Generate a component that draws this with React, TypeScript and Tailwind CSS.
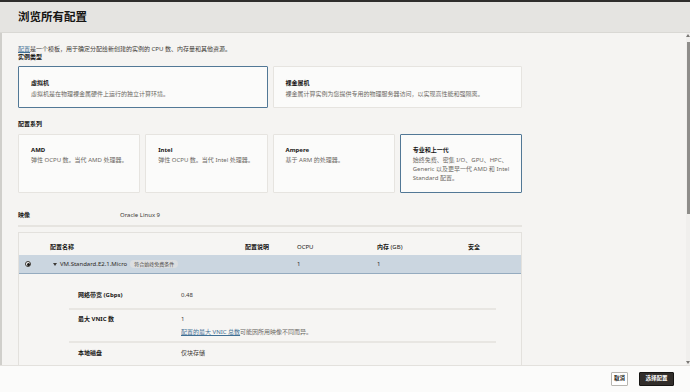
import type { ReactNode } from "react";

const seriesCards = [
  {
    title: "AMD",
    lines: ["弹性 OCPU 数。当代 AMD 处理器。"],
    selected: false,
  },
  {
    title: "Intel",
    lines: ["弹性 OCPU 数。当代 Intel 处理器。"],
    selected: false,
  },
  {
    title: "Ampere",
    lines: ["基于 ARM 的处理器。"],
    selected: false,
  },
  {
    title: "专业和上一代",
    lines: [
      "始终免费、密集 I/O、GPU、HPC、",
      "Generic 以及更早一代 AMD 和 Intel",
      "Standard 配置。",
    ],
    selected: true,
  },
];

const cols = "grid grid-cols-[31px_195px_52px_80px_91px_1fr]";

export default function App() {
  return (
    <div className="flex h-[392px] w-[690px] flex-col overflow-hidden bg-[#f5f4f2] font-[family-name:'Noto_Sans','Noto_Sans_CJK_SC',sans-serif] text-[#161513]">
      <div className="h-[2px] bg-[#2f2e2c]" />

      <header className="flex h-[31px] items-center border-b border-[#d9d8d4] bg-[#e5e4e1] pl-[18px]">
        <h1 className="text-[11.5px] font-bold leading-none">
          浏览所有配置
        </h1>
      </header>

      <div className="flex min-h-0 flex-1 border-l-2 border-[#d0cfcb]">
        <main className="min-w-0 flex-1 overflow-hidden pl-[16px] pt-[12px]">
          <div className="w-[504px]">
            <p className="text-[6px] leading-[8px] text-[#3d3a36]">
              <span className="text-[#3f6f94] underline">配置</span>
              是一个模板，用于确定分配给新创建的实例的 CPU 数、内存量和其他资源。
            </p>

            <p className="text-[6px] font-bold leading-[8px]">
              实例类型
            </p>

            <div className="mt-[5px] grid grid-cols-2 gap-[5px]">
              <ShapeCard
                title="虚拟机"
                selected
                height="h-[42px]"
              >
                虚拟机是在物理裸金属硬件上运行的独立计算环境。
              </ShapeCard>

              <ShapeCard title="裸金属机" height="h-[42px]">
                裸金属计算实例为您提供专用的物理服务器访问，以实现高性能和强隔离。
              </ShapeCard>
            </div>

            <p className="mt-[12px] text-[6px] font-bold leading-[8px]">
              配置系列
            </p>

            <div className="mt-[6px] grid grid-cols-4 gap-[5px]">
              {seriesCards.map((card) => (
                <div
                  key={card.title}
                  className={`h-[59px] rounded-[1px] bg-[#fbfbfa] pl-[12px] pt-[11px] ${
                    card.selected
                      ? "border border-[#527896]"
                      : "border border-[#e6e4e0]"
                  }`}
                >
                  <p className="text-[6px] font-bold leading-[8px]">
                    {card.title}
                  </p>

                  <div className="mt-[2px] text-[6px] leading-[9px] text-[#6b6863]">
                    {card.lines.map((line) => (
                      <p key={line}>{line}</p>
                    ))}
                  </div>
                </div>
              ))}
            </div>

            <div className="mt-[18px] flex h-[8px] items-center text-[6px] leading-[8px]">
              <span className="w-[102px] font-bold">映像</span>
              <span className="text-[#3d3a36]">Oracle Linux 9</span>
            </div>

            <div className="mt-[6px] h-[2px] bg-[#e6e4e0]" />

            <div className="mt-[5px] h-[200px] border border-[#e3e1dd] bg-[#f6f5f3]">
              <div
                className={`${cols} h-[22px] items-end pb-[4px] text-[6px] font-bold leading-[8px]`}
              >
                <span />
                <span>配置名称</span>
                <span>配置说明</span>
                <span className="font-normal">OCPU</span>
                <span>
                  内存 <span className="font-normal">(GB)</span>
                </span>
                <span>安全</span>
              </div>

              <div
                className={`${cols} h-[19px] items-center border-b border-[#95abbf] bg-[#cbd6e0] text-[6px] leading-[8px] text-[#2b2926]`}
              >
                <span className="flex pl-[6px]">
                  <span className="flex h-[6px] w-[6px] items-center justify-center rounded-full border border-[#3d3a36] bg-white">
                    <span className="h-[3px] w-[3px] rounded-full bg-[#161513]" />
                  </span>
                </span>

                <span className="flex items-center">
                  <svg
                    width="4"
                    height="3"
                    viewBox="0 0 4 3"
                    className="ml-[3px] mr-[3px]"
                  >
                    <path d="M0 0 L4 0 L2 3 Z" fill="#3d3a36" />
                  </svg>
                  <span>VM.Standard.E2.1.Micro</span>
                  <span className="ml-[3px] rounded-full bg-[#dcdee0] px-[4px] text-[5px] leading-[8px] text-[#4f4c48]">
                    符合始终免费条件
                  </span>
                </span>

                <span />
                <span>1</span>
                <span>1</span>
                <span />
              </div>

              <div className="ml-[50px] mr-[25px] pt-[12px] text-[6px] leading-[8px]">
                <DetailRow
                  label="网络带宽 (Gbps)"
                  className="pb-[9px] pt-[5px]"
                >
                  <p className="text-[#3d3a36]">0.48</p>
                </DetailRow>

                <DetailRow
                  label="最大 VNIC 数"
                  className="border-t-2 border-[#e8e6e2] pb-[5px] pt-[5px]"
                >
                  <p className="text-[#3d3a36]">1</p>
                  <p className="mt-[5px] text-[#6b6863]">
                    <span className="text-[#3f6f94] underline">
                      配置的最大 VNIC 总数
                    </span>
                    可能因所用映像不同而异。
                  </p>
                </DetailRow>

                <DetailRow
                  label="本地磁盘"
                  className="border-t-2 border-[#e8e6e2] pt-[6px]"
                >
                  <p className="text-[#3d3a36]">仅块存储</p>
                </DetailRow>
              </div>
            </div>
          </div>
        </main>

        <div className="flex w-[4px] flex-col items-center bg-[#f0efed] pt-[1px]">
          <svg width="4" height="3" viewBox="0 0 4 3">
            <path d="M2 0 L4 3 L0 3 Z" fill="#7a7875" />
          </svg>
          <div className="mt-[5px] h-[172px] w-[3px] bg-[#8e8d8a]" />
          <div className="flex-1" />
          <svg
            width="4"
            height="3"
            viewBox="0 0 4 3"
            className="mb-[1px]"
          >
            <path d="M0 0 L4 0 L2 3 Z" fill="#7a7875" />
          </svg>
        </div>
      </div>

      <footer className="flex h-[27px] items-center justify-end gap-[11px] border-t border-[#e3e1dd] bg-[#fbfbfa] pr-[16px]">
        <button
          type="button"
          className="flex h-[14px] w-[17px] items-center justify-center rounded-[1px] border border-[#b8b6b1] bg-white text-[5.5px] font-bold leading-none text-[#161513]"
        >
          取消
        </button>

        <button
          type="button"
          className="flex h-[14px] w-[35px] items-center justify-center rounded-[1px] border border-[#161513] bg-[#312d2a] text-[5.5px] font-bold leading-none text-white"
        >
          选择配置
        </button>
      </footer>
    </div>
  );
}

interface ShapeCardProps {
  title: string;
  selected?: boolean;
  height: string;
  children: ReactNode;
}

function ShapeCard({
  title,
  selected = false,
  height,
  children,
}: ShapeCardProps) {
  return (
    <div
      className={`${height} rounded-[1px] bg-[#fbfbfa] pl-[12px] pt-[12px] ${
        selected
          ? "border border-[#527896]"
          : "border border-[#e6e4e0]"
      }`}
    >
      <p className="text-[6px] font-bold leading-[8px]">
        {title}
      </p>

      <p className="mt-[3px] text-[6px] leading-[8px] text-[#6b6863]">
        {children}
      </p>
    </div>
  );
}

interface DetailRowProps {
  label: string;
  className: string;
  children: ReactNode;
}

function DetailRow({
  label,
  className,
  children,
}: DetailRowProps) {
  return (
    <div className={`flex pl-[9px] ${className}`}>
      <span className="w-[103px] shrink-0 font-bold">
        {label}
      </span>

      <div>{children}</div>
    </div>
  );
}
